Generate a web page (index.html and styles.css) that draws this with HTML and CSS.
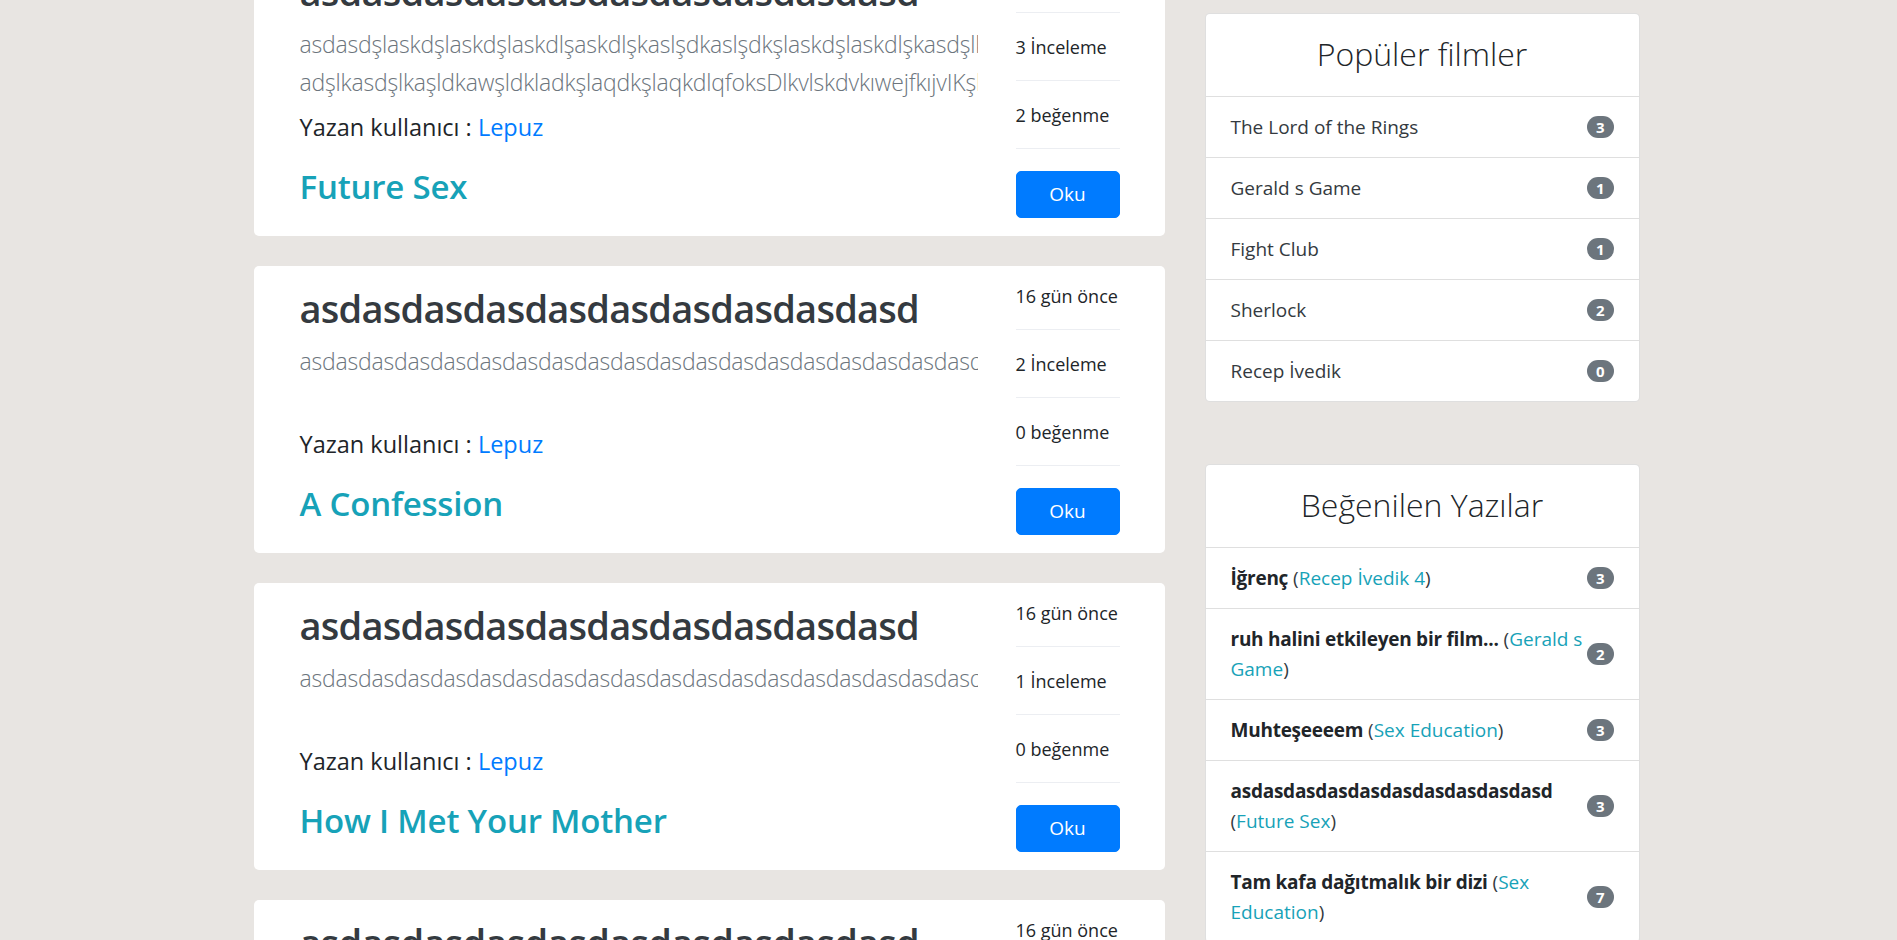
FILE: index.html
```html
<!DOCTYPE html>
<html lang="tr">
<head>
<meta charset="utf-8">
<title>Yazılar</title>
<link rel="stylesheet" href="styles.css">
</head>
<body>
<div class="container">
  <main class="feed">
    <article class="post">
      <div class="post-main">
        <h2 class="post-title">asdasdasdasdasdasdasdasdasdasd</h2>
        <p class="post-lead">asdasdşlaskdşlaskdşlaskdlşaskdlşkaslşdkaslşdkşlaskdşlaskdlşkasdşlkasdkşlasdkşlaskdşlkasd adşlkasdşlkaşldkawşldkladkşlaqdkşlaqkdlqfoksDlkvlskdvkıwejfkıjvIKşlaksdşlaksd</p>
        <p class="post-author">Yazan kullanıcı : <a class="user-link" href="#">Lepuz</a></p>
        <h3 class="post-film"><a href="#">Future Sex</a></h3>
      </div>
      <div class="post-side">
        <ul class="stats">
          <li>16 gün önce</li>
          <li>3 İnceleme</li>
          <li>2 beğenme</li>
        </ul>
        <a class="btn-read" href="#">Oku</a>
      </div>
    </article>

    <article class="post">
      <div class="post-main">
        <h2 class="post-title">asdasdasdasdasdasdasdasdasdasd</h2>
        <p class="post-lead">asdasdasdasdasdasdasdasdasdasdasdasdasdasdasdasdasdasdasdasdasdasdasdasdasdasdasdasdasdasd</p>
        <p class="post-author">Yazan kullanıcı : <a class="user-link" href="#">Lepuz</a></p>
        <h3 class="post-film"><a href="#">A Confession</a></h3>
      </div>
      <div class="post-side">
        <ul class="stats">
          <li>16 gün önce</li>
          <li>2 İnceleme</li>
          <li>0 beğenme</li>
        </ul>
        <a class="btn-read" href="#">Oku</a>
      </div>
    </article>

    <article class="post">
      <div class="post-main">
        <h2 class="post-title">asdasdasdasdasdasdasdasdasdasd</h2>
        <p class="post-lead">asdasdasdasdasdasdasdasdasdasdasdasdasdasdasdasdasdasdasdasdasdasdasdasdasdasdasdasdasdasd</p>
        <p class="post-author">Yazan kullanıcı : <a class="user-link" href="#">Lepuz</a></p>
        <h3 class="post-film"><a href="#">How I Met Your Mother</a></h3>
      </div>
      <div class="post-side">
        <ul class="stats">
          <li>16 gün önce</li>
          <li>1 İnceleme</li>
          <li>0 beğenme</li>
        </ul>
        <a class="btn-read" href="#">Oku</a>
      </div>
    </article>

    <article class="post">
      <div class="post-main">
        <h2 class="post-title">asdasdasdasdasdasdasdasdasdasd</h2>
        <p class="post-lead">asdasdasdasdasdasdasdasdasdasdasdasdasdasdasdasdasdasdasdasdasdasdasdasdasdasdasdasdasdasd</p>
        <p class="post-author">Yazan kullanıcı : <a class="user-link" href="#">Lepuz</a></p>
        <h3 class="post-film"><a href="#">Sherlock</a></h3>
      </div>
      <div class="post-side">
        <ul class="stats">
          <li>16 gün önce</li>
          <li>1 İnceleme</li>
          <li>0 beğenme</li>
        </ul>
        <a class="btn-read" href="#">Oku</a>
      </div>
    </article>
  </main>

  <aside class="sidebar">
    <section class="side-card">
      <h3 class="side-title">Popüler filmler</h3>
      <ul class="side-list">
        <li><span class="item-text">The Lord of the Rings</span><span class="badge">3</span></li>
        <li><span class="item-text">Gerald s Game</span><span class="badge">1</span></li>
        <li><span class="item-text">Fight Club</span><span class="badge">1</span></li>
        <li><span class="item-text">Sherlock</span><span class="badge">2</span></li>
        <li><span class="item-text">Recep İvedik</span><span class="badge">0</span></li>
      </ul>
    </section>

    <section class="side-card">
      <h3 class="side-title">Beğenilen Yazılar</h3>
      <ul class="side-list">
        <li><span class="item-text"><b>İğrenç</b> (<a href="#">Recep İvedik 4</a>)</span><span class="badge">3</span></li>
        <li><span class="item-text"><b>ruh halini etkileyen bir film...</b> (<a href="#">Gerald s Game</a>)</span><span class="badge">2</span></li>
        <li><span class="item-text"><b>Muhteşeeeem</b> (<a href="#">Sex Education</a>)</span><span class="badge">3</span></li>
        <li><span class="item-text"><b>asdasdasdasdasdasdasdasdasdasd</b> (<a href="#">Future Sex</a>)</span><span class="badge">3</span></li>
        <li><span class="item-text"><b>Tam kafa dağıtmalık bir dizi</b> (<a href="#">Sex Education</a>)</span><span class="badge">7</span></li>
      </ul>
    </section>
  </aside>
</div>
</body>
</html>
```

FILE: styles.css
```css
* { box-sizing: border-box; }

html, body {
  margin: 0;
  padding: 0;
}

body {
  background: #e8e5e2;
  font-family: "Open Sans", "Noto Sans", "Liberation Sans", sans-serif;
  font-size: 19px;
  line-height: 1.5;
  color: #212529;
  overflow: hidden;
}

a { text-decoration: none; }

.container {
  width: 1387px;
  margin-left: calc(50% - 695px);
  display: flex;
  align-items: flex-start;
  gap: 40px;
}

/* ---------- feed ---------- */
.feed {
  width: 911px;
  flex: none;
  margin-top: -51px;
  display: flex;
  flex-direction: column;
  gap: 30px;
}

.post {
  background: #fff;
  border-radius: 5px;
  height: 287px;
  display: flex;
  padding: 0 45px 0 46px;
}

.post-main {
  flex: 1;
  min-width: 0;
  padding-top: 18px;
  margin-right: 38px;
}

.post-title {
  margin: 0 0 11px;
  font-size: 38px;
  letter-spacing: -0.75px;
  line-height: 48px;
  font-weight: 600;
  color: #343a40;
  white-space: nowrap;
  overflow: hidden;
}

.post-lead {
  margin: 0 0 8px;
  font-size: 23px;
  letter-spacing: -0.2px;
  line-height: 37.5px;
  height: 75px;
  font-weight: 300;
  color: #6c757d;
  overflow: hidden;
}

.post-author {
  margin: 0 0 19px;
  font-size: 23.5px;
  line-height: 37.5px;
  color: #212529;
}

.user-link { color: #007bff; }

.post-film {
  margin: 0;
  font-size: 33px;
  letter-spacing: -0.2px;
  line-height: 42px;
  font-weight: 600;
}

.post-film a { color: #17a2b8; }

.post-side {
  width: 104px;
  flex: none;
  display: flex;
  flex-direction: column;
}

.stats {
  list-style: none;
  margin: 0;
  padding: 0;
}

.stats li {
  padding: 19px 0 18px;
  font-size: 18px;
  line-height: 30px;
  white-space: nowrap;
  border-bottom: 1px solid #eceef2;
  color: #212529;
}

.stats li:first-child { padding-top: 15px; }

.btn-read {
  display: block;
  margin-top: 22px;
  height: 47px;
  line-height: 45px;
  border: 1px solid #007bff;
  background: #007bff;
  color: #fff;
  text-align: center;
  font-size: 19px;
  border-radius: 5px;
}

/* ---------- sidebar ---------- */
.sidebar {
  width: 435px;
  flex: none;
  margin-top: 13px;
  display: flex;
  flex-direction: column;
  gap: 62px;
}

.side-card {
  background: #fff;
  border: 1px solid rgba(0, 0, 0, 0.125);
  border-radius: 5px;
  overflow: hidden;
}

.side-title {
  margin: 0;
  padding: 19px 0 21px;
  font-size: 32px;
  line-height: 42px;
  font-weight: 300;
  text-align: center;
  color: #212529;
  border-bottom: 1px solid rgba(0, 0, 0, 0.125);
}

.side-list {
  list-style: none;
  margin: 0;
  padding: 0;
}

.side-list li {
  display: flex;
  align-items: center;
  justify-content: space-between;
  padding: 15px 25px;
  font-size: 19px;
  line-height: 30px;
  color: #343a40;
  border-bottom: 1px solid rgba(0, 0, 0, 0.125);
}

.side-list li:last-child { border-bottom: none; }

.side-list b { font-weight: 700; color: #212529; letter-spacing: -0.25px; }

.side-list a { color: #17a2b8; }

.badge {
  flex: none;
  display: inline-block;
  background: #6c757d;
  color: #fff;
  font-size: 15px;
  font-weight: 700;
  line-height: 1;
  padding: 3.75px 9px;
  border-radius: 10em;
}
```
